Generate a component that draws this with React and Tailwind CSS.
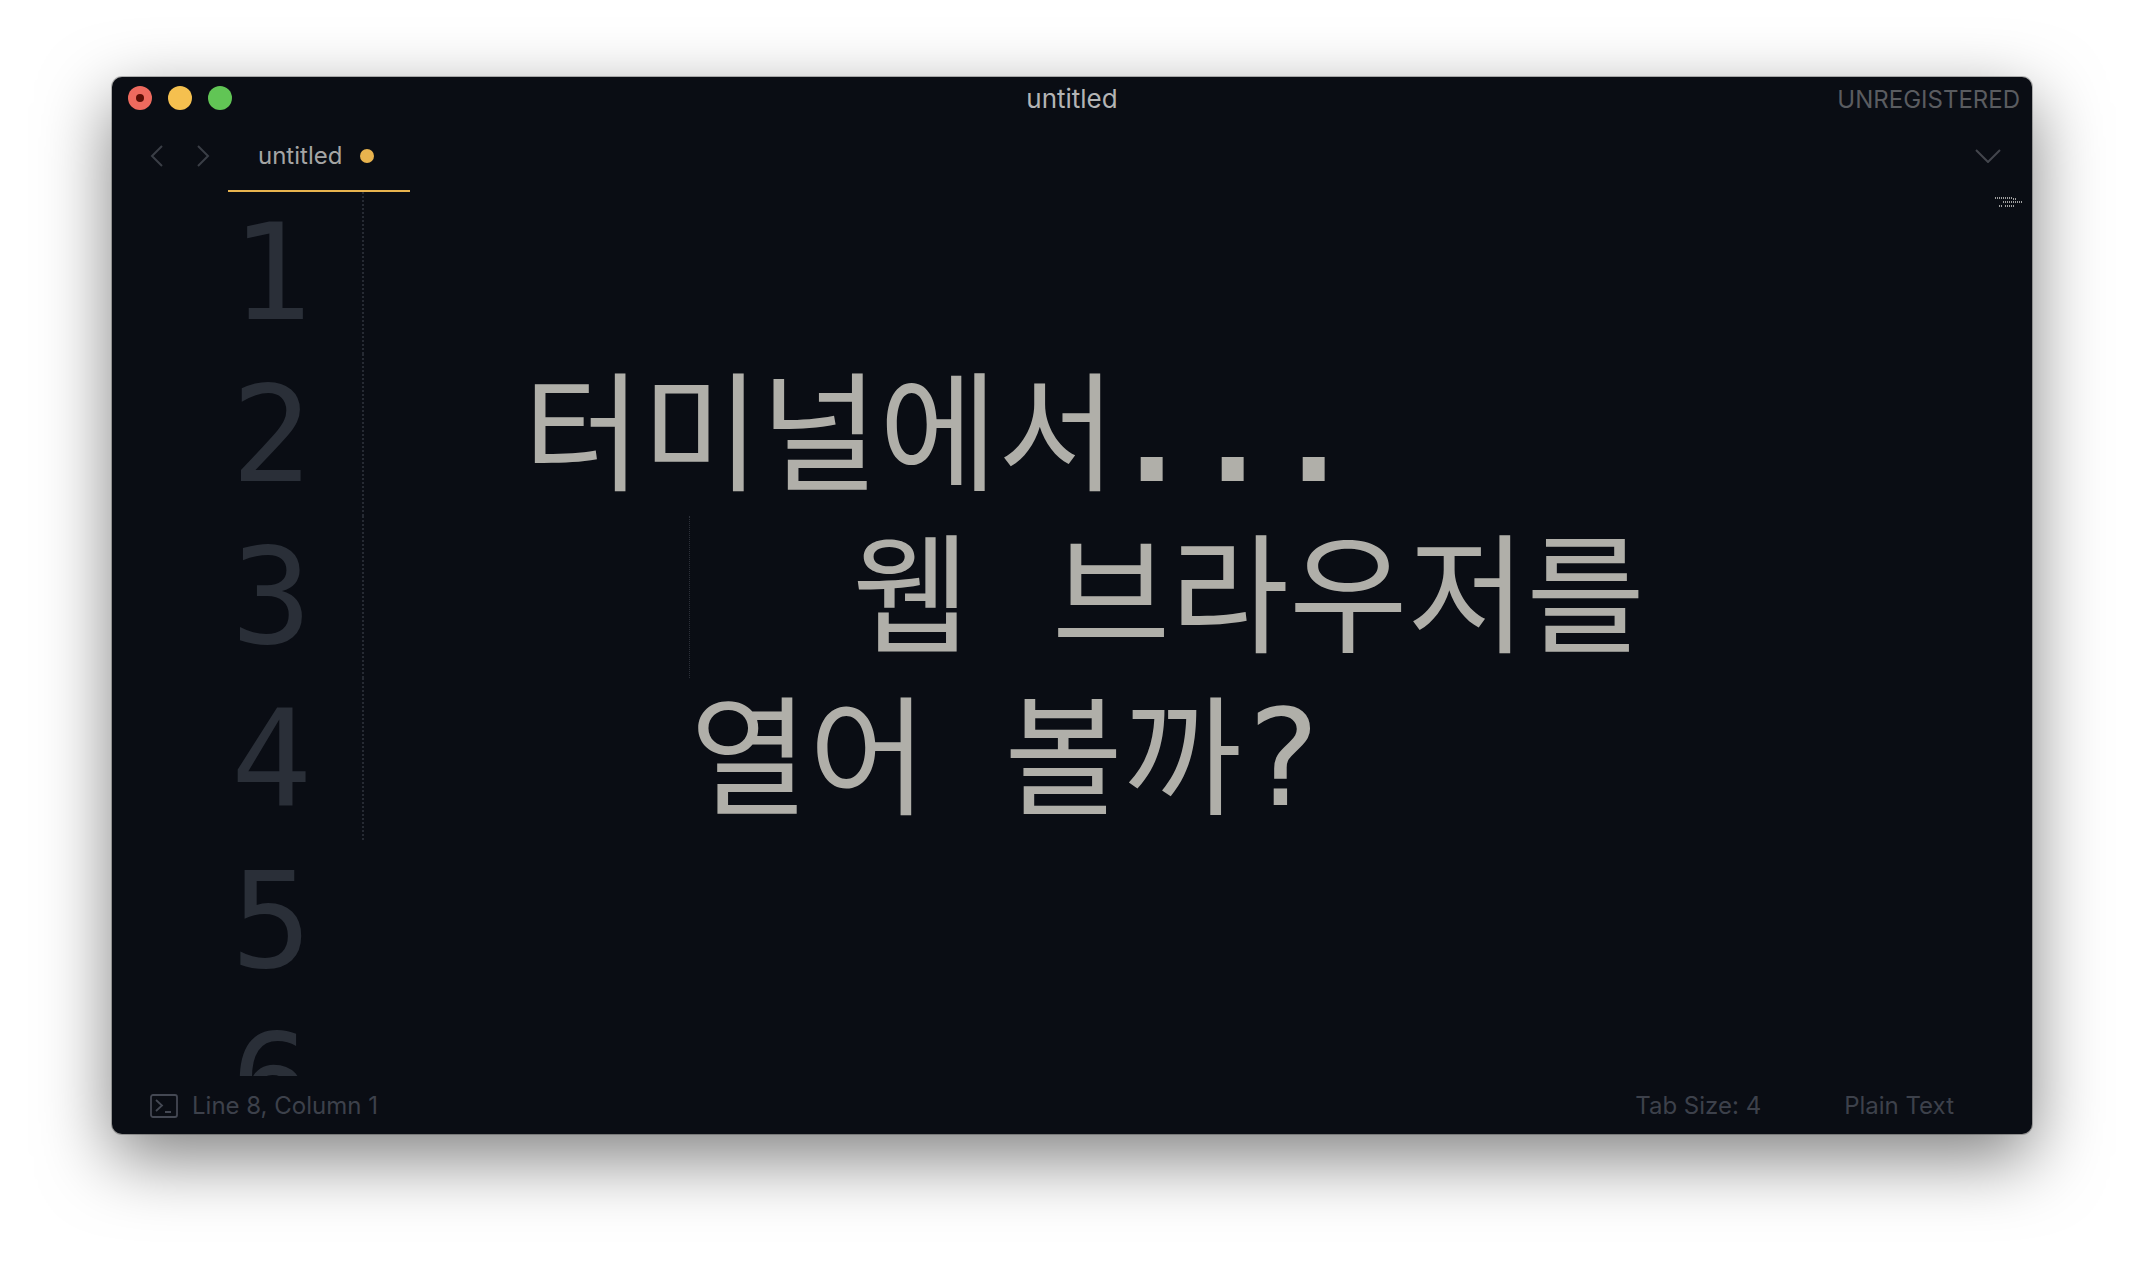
import React from 'react';

const mono = "font-['DejaVu_Sans_Mono','Noto_Sans_CJK_KR',monospace]";
const ko = "font-['Noto_Sans_CJK_KR',sans-serif] text-[129px] leading-[0]";

const Row = ({ n, guide, tab, tabGuide, children }) => {
  return (
    <div className="flex h-[162px] shrink-0">
      <div className="w-[250px] shrink-0 pr-[50px] text-right text-[#2a2f38]">{n}</div>
      <div className={`flex flex-1 pl-[2px] border-l-2 border-dotted ${guide ? 'border-[#262a33]' : 'border-transparent'}`}>
        {tab && (
          <span className={`w-[324px] shrink-0 border-r border-dotted ${tabGuide ? 'border-[#2c3039]' : 'border-transparent'}`} />
        )}
        <span className="whitespace-pre text-[#b0afa9]">{children}</span>
      </div>
    </div>
  );
};

const Minimap = () => {
  const cells = [
    [0, 1], [2, 1], [4, 1], [6, 1], [8, 1], [10, 1], [12, 1], [14, 1], [16, 1], [18, 2], [20, 2],
    [8, 5], [10, 5], [12, 5], [14, 5], [16, 5], [18, 5], [20, 5], [22, 5], [24, 5], [26, 5],
    [4, 9], [6, 9], [10, 9], [12, 9], [14, 9], [16, 9], [18, 9],
  ];
  return (
    <svg className="absolute top-[4px] right-[9px]" width="28" height="12" viewBox="0 0 28 12" shapeRendering="crispEdges">
      {cells.map(([x, y], i) => (
        <rect key={i} x={x} y={y} width="1" height="2" fill="#a0a0a0" />
      ))}
    </svg>
  );
};

const App = () => {
  return (
    <div className="w-[2144px] h-[1282px] overflow-hidden bg-white pt-[77px] pl-[112px] font-['Inter',sans-serif]">
      <div className="flex h-[1057px] w-[1920px] flex-col overflow-hidden rounded-[10px] bg-[#0a0d14] shadow-[0_24px_70px_0px_rgba(0,0,0,0.5),0_0_0_1px_rgba(0,0,0,0.25)]">
        {/* title bar */}
        <div className="grid h-[42px] shrink-0 grid-cols-[1fr_auto_1fr] items-center">
          <div className="flex gap-[16px] pl-[16px]">
            <span className="flex h-[24px] w-[24px] items-center justify-center rounded-full bg-[#ee6a5e]">
              <span className="h-[8px] w-[8px] rounded-full bg-[#5a0e05]" />
            </span>
            <span className="h-[24px] w-[24px] rounded-full bg-[#f5c04f]" />
            <span className="h-[24px] w-[24px] rounded-full bg-[#61c555]" />
          </div>
          <div className="text-[26px] text-[#b4b4b4]">untitled</div>
          <div className="pr-[12px] pt-[3px] text-right text-[24px] text-[#5a5c60]">UNREGISTERED</div>
        </div>

        {/* tabs */}
        <div className="flex h-[73px] shrink-0 items-start">
          <div className="flex h-[74px] items-center gap-[32px] pl-[38px]">
            <svg width="14" height="22" viewBox="0 0 14 22" fill="none" stroke="#3a3e46" strokeWidth="2">
              <path d="M12 1 2 11l10 10" />
            </svg>
            <svg width="14" height="22" viewBox="0 0 14 22" fill="none" stroke="#3a3e46" strokeWidth="2">
              <path d="M2 1l10 10L2 21" />
            </svg>
          </div>
          <div className="ml-[18px] flex h-[73px] w-[182px] items-center gap-[18px] border-b-2 border-[#e8b34e] pl-[30px] pt-[2px]">
            <span className="text-[24px] text-[#a5a5a5]">untitled</span>
            <span className="h-[14px] w-[14px] rounded-full bg-[#e8b34e]" />
          </div>
          <div className="ml-auto flex h-[74px] items-center pr-[31px]">
            <svg width="26" height="14" viewBox="0 0 26 14" fill="none" stroke="#43464d" strokeWidth="2">
              <path d="M1 1l12 12L25 1" />
            </svg>
          </div>
        </div>

        {/* editor */}
        <div className={`relative flex flex-1 flex-col overflow-hidden text-[134.5px] leading-[162px] ${mono}`}>
          <Minimap />
          <Row n="1" guide />
          <Row n="2" guide>
            {'  '}
            <span className={`${ko} -ml-[5px]`}>터미널에서</span>
            <span className="-ml-[5px] font-bold">...</span>
          </Row>
          <Row n="3" guide tab tabGuide>
            {'  '}
            <span className={ko}>웹</span> <span className={ko}>브라우저를</span>
          </Row>
          <Row n="4" guide tab>
            <span className={ko}>열어</span> <span className={`${ko} -ml-[4px]`}>볼까</span>?
          </Row>
          <Row n="5" />
          <Row n="6" />
        </div>

        {/* status bar */}
        <div className="flex h-[58px] shrink-0 items-center pt-[2px] text-[24px] text-[#3d414b]">
          <svg className="ml-[38px]" width="28" height="24" viewBox="0 0 28 24" fill="none" stroke="#444853" strokeWidth="1.8">
            <rect x="1" y="1" width="26" height="22" rx="2" />
            <path d="M6 6l6 5.5L6 17M15 18h6" />
          </svg>
          <span className="ml-[14px]">Line 8, Column 1</span>
          <span className="ml-auto">Tab Size: 4</span>
          <span className="ml-[83px] mr-[78px]">Plain Text</span>
        </div>
      </div>
    </div>
  );
};

export default App;
